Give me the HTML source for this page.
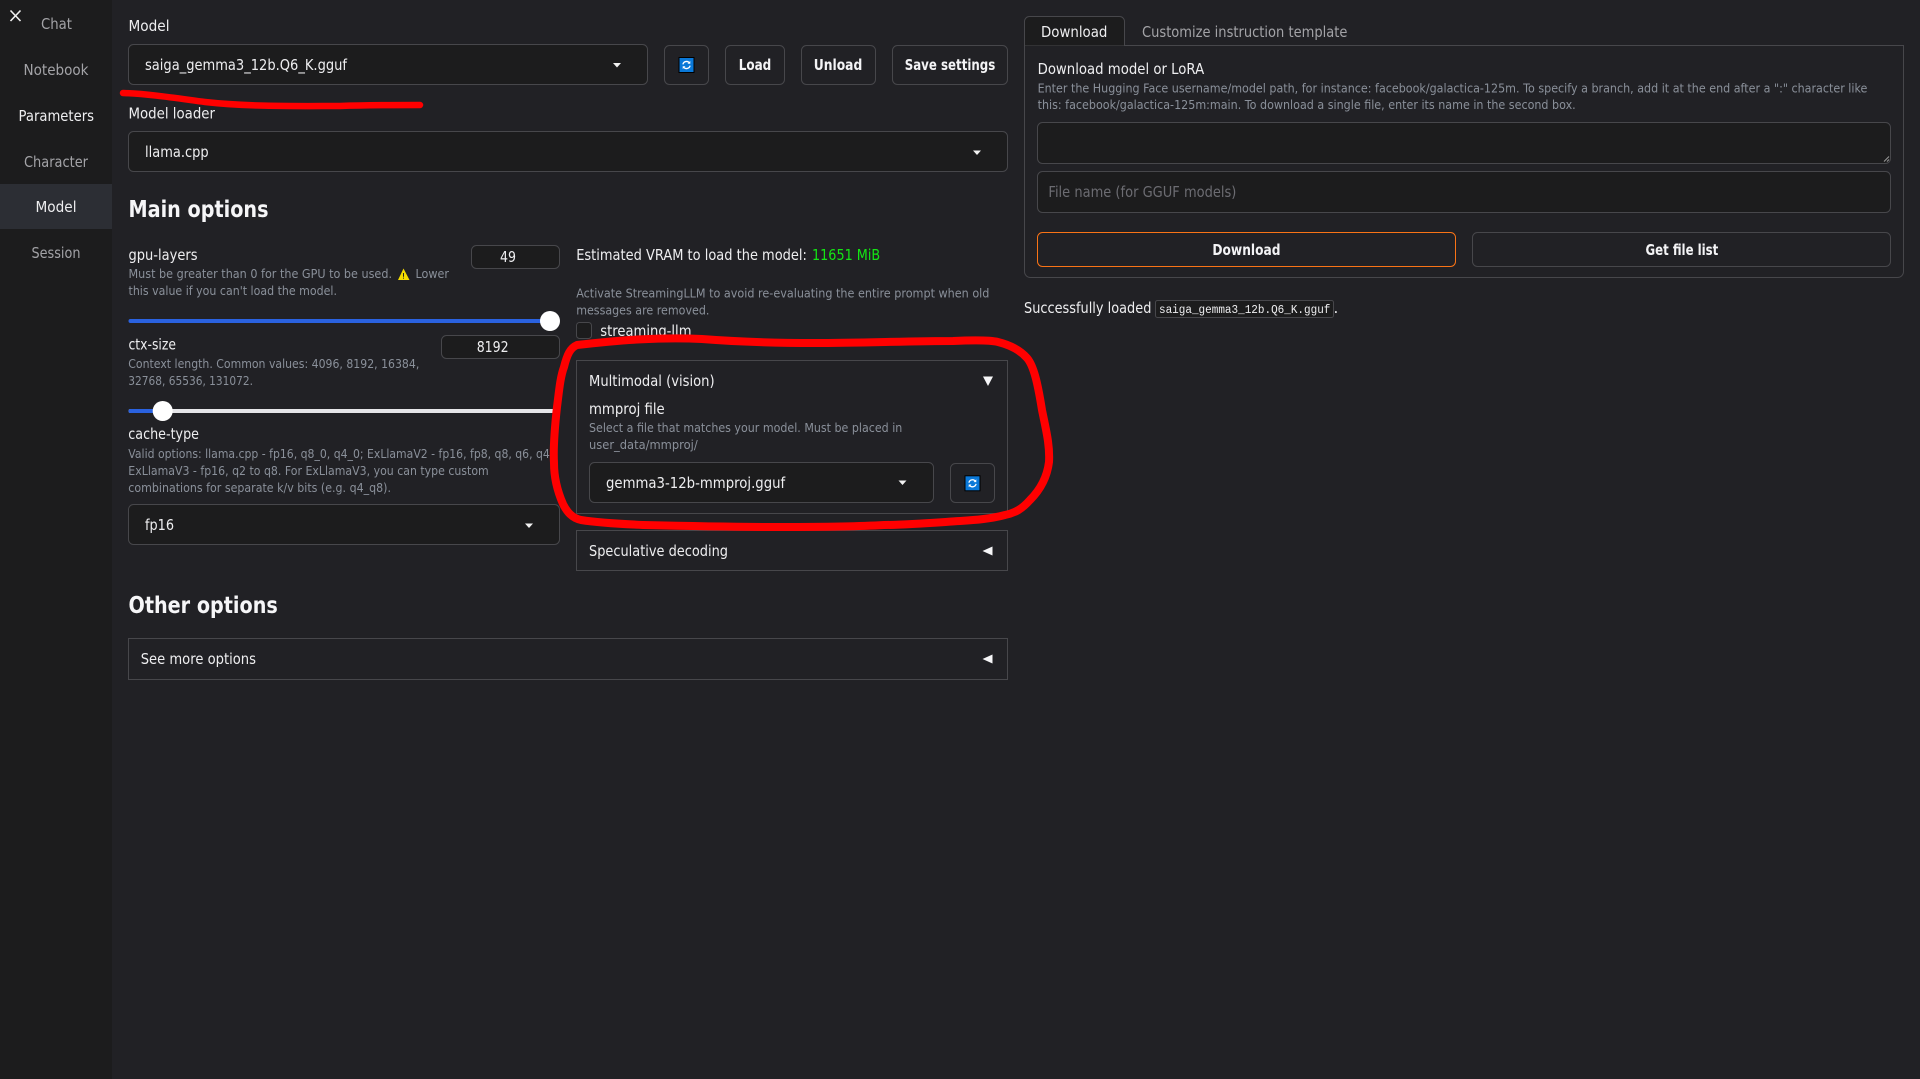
<!DOCTYPE html>
<html><head><meta charset="utf-8"><title>Model</title>
<style>
html,body{margin:0;padding:0;background:#212125;overflow:hidden}
svg{display:block}
text{font-family:"DejaVu Sans","Liberation Sans",sans-serif;font-size:15px;fill:#eeeef0}
.nav{font-size:15px;fill:#a3a3a7}
.info{font-size:12.8px;fill:#8a909a}
.b{font-weight:700;font-size:15px;fill:#f4f4f6}
.h{font-weight:700;font-size:23.5px;fill:#f6f6f8}
.box{fill:#1c1c1d;stroke:#47474b;stroke-width:1}
.btn{fill:#212125;stroke:#47474b;stroke-width:1}
.acc{fill:none;stroke:#47474b;stroke-width:1}
</style></head>
<body>
<svg xmlns="http://www.w3.org/2000/svg" width="1920" height="1079" viewBox="0 0 1920 1079">
<defs>
<g id="ref">
<rect x="-8" y="-8" width="16" height="16" fill="#000"/>
<rect x="-7" y="-7" width="14" height="14" fill="#0a78d8"/>
<path d="M-3.6 -0.6A3.7 3.7 0 0 1 3 -2M3.6 0.6A3.7 3.7 0 0 1 -3 2" fill="none" stroke="#fff" stroke-width="1.3"/>
<path d="M3.8 -4V-1.2H1zM-3.8 4V1.2H-1z" fill="#fff"/>
</g>
</defs>
<rect width="1920" height="1079" fill="#212125"/>
<rect width="112" height="1079" fill="#1c1c1d"/>
<rect y="184" width="112" height="45" fill="#2c2e34"/>
<path d="M10.5 10.5L20.5 21M20.5 10.5L10.5 21" stroke="#f0f0f0" stroke-width="1.6" fill="none"/>
<text class="nav" x="41" y="29" textLength="31" lengthAdjust="spacingAndGlyphs">Chat</text>
<text class="nav" x="23.5" y="75" textLength="65" lengthAdjust="spacingAndGlyphs">Notebook</text>
<text x="18.5" y="121" textLength="75.5" lengthAdjust="spacingAndGlyphs" style="fill:#eeeef0">Parameters</text>
<text class="nav" x="24" y="167" textLength="64" lengthAdjust="spacingAndGlyphs">Character</text>
<text x="35.5" y="212" textLength="41" lengthAdjust="spacingAndGlyphs" style="fill:#eeeef0">Model</text>
<text class="nav" x="31.5" y="258" textLength="49" lengthAdjust="spacingAndGlyphs">Session</text>

<text x="128.5" y="31" textLength="41" lengthAdjust="spacingAndGlyphs">Model</text>
<rect class="box" x="128.5" y="44.5" width="519" height="40" rx="5"/>
<text x="145" y="70" textLength="202" lengthAdjust="spacingAndGlyphs">saiga_gemma3_12b.Q6_K.gguf</text>
<path d="M613 63h8l-4 4.5z" fill="#f2f2f2"/>
<rect class="btn" x="664.5" y="45.5" width="44" height="39" rx="5"/>
<use href="#ref" x="686.5" y="65"/>
<rect class="btn" x="725.5" y="45.5" width="59" height="39" rx="5"/>
<text class="b" x="738.7" y="70" textLength="32.6" lengthAdjust="spacingAndGlyphs">Load</text>
<rect class="btn" x="801.5" y="45.5" width="74" height="39" rx="5"/>
<text class="b" x="813.7" y="70" textLength="48.6" lengthAdjust="spacingAndGlyphs">Unload</text>
<rect class="btn" x="892.5" y="45.5" width="115" height="39" rx="5"/>
<text class="b" x="904.7" y="70" textLength="90.6" lengthAdjust="spacingAndGlyphs">Save settings</text>

<text x="128.5" y="118.5" textLength="86.5" lengthAdjust="spacingAndGlyphs">Model loader</text>
<rect class="box" x="128.5" y="131.5" width="879" height="40" rx="5"/>
<text x="145" y="157" textLength="63.6" lengthAdjust="spacingAndGlyphs">llama.cpp</text>
<path d="M973 150.5h8l-4 4.5z" fill="#f2f2f2"/>
<text class="h" x="128.5" y="217" textLength="140" lengthAdjust="spacingAndGlyphs">Main options</text>

<text x="128.5" y="260" textLength="69" lengthAdjust="spacingAndGlyphs">gpu-layers</text>
<rect class="box" x="471.5" y="245.5" width="88" height="23" rx="5"/>
<text x="500" y="262" textLength="16" lengthAdjust="spacingAndGlyphs">49</text>
<text class="info" x="128.5" y="278" textLength="263.5" lengthAdjust="spacingAndGlyphs">Must be greater than 0 for the GPU to be used.</text>
<path d="M403.5 268.5L409.5 280H398z" fill="#f5dd00"/><path d="M403 273v3.8h1V273zM403 277.6v1h1v-1z" fill="#222"/>
<text class="info" x="415.5" y="278" textLength="33.5" lengthAdjust="spacingAndGlyphs">Lower</text>
<text class="info" x="128.5" y="295" textLength="208.5" lengthAdjust="spacingAndGlyphs">this value if you can't load the model.</text>
<rect x="128.5" y="319" width="422" height="4" rx="2" fill="#2a62e0"/>
<circle cx="550" cy="321" r="10" fill="#fff"/>

<text x="128.5" y="349.5" textLength="47.5" lengthAdjust="spacingAndGlyphs">ctx-size</text>
<rect class="box" x="441.5" y="335.5" width="118" height="23" rx="5"/>
<text x="476.7" y="352" textLength="32" lengthAdjust="spacingAndGlyphs">8192</text>
<text class="info" x="128.3" y="368" textLength="291" lengthAdjust="spacingAndGlyphs">Context length. Common values: 4096, 8192, 16384,</text>
<text class="info" x="128.3" y="385" textLength="124.7" lengthAdjust="spacingAndGlyphs">32768, 65536, 131072.</text>
<rect x="128.5" y="409" width="431" height="4" rx="2" fill="#e5e5e8"/>
<rect x="128.5" y="409" width="32" height="4" rx="2" fill="#2a62e0"/>
<circle cx="162.7" cy="411" r="10" fill="#fff"/>

<text x="128.3" y="439" textLength="70.7" lengthAdjust="spacingAndGlyphs">cache-type</text>
<text class="info" x="128.3" y="458" textLength="425" lengthAdjust="spacingAndGlyphs">Valid options: llama.cpp - fp16, q8_0, q4_0; ExLlamaV2 - fp16, fp8, q8, q6, q4,</text>
<text class="info" x="128.3" y="475" textLength="360.4" lengthAdjust="spacingAndGlyphs">ExLlamaV3 - fp16, q2 to q8. For ExLlamaV3, you can type custom</text>
<text class="info" x="128.3" y="492" textLength="262.7" lengthAdjust="spacingAndGlyphs">combinations for separate k/v bits (e.g. q4_q8).</text>
<rect class="box" x="128.5" y="504.5" width="431" height="40" rx="5"/>
<text x="145" y="530" textLength="29" lengthAdjust="spacingAndGlyphs">fp16</text>
<path d="M525 523.5h8l-4 4.5z" fill="#f2f2f2"/>

<text class="h" x="128.5" y="613" textLength="149.3" lengthAdjust="spacingAndGlyphs">Other options</text>
<rect class="acc" x="128.5" y="638.5" width="879" height="41"/>
<text x="140.7" y="664" textLength="115.3" lengthAdjust="spacingAndGlyphs">See more options</text>
<path d="M992.5 654.5v9l-10-4.5z" fill="#f6f6f8"/>

<text x="576.2" y="260" textLength="230.7" lengthAdjust="spacingAndGlyphs">Estimated VRAM to load the model:</text>
<text x="812" y="260" textLength="68.2" lengthAdjust="spacingAndGlyphs" style="fill:#14e614">11651 MiB</text>
<text class="info" x="576.2" y="297.5" textLength="413.2" lengthAdjust="spacingAndGlyphs">Activate StreamingLLM to avoid re-evaluating the entire prompt when old</text>
<text class="info" x="576.2" y="314.5" textLength="133.2" lengthAdjust="spacingAndGlyphs">messages are removed.</text>
<rect class="box" x="576.5" y="322.5" width="15" height="16" rx="3"/>
<text x="600.3" y="336" textLength="91.2" lengthAdjust="spacingAndGlyphs">streaming-llm</text>

<rect class="acc" x="576.5" y="360.5" width="431" height="153"/>
<text x="589" y="386" textLength="125.6" lengthAdjust="spacingAndGlyphs">Multimodal (vision)</text>
<path d="M983 376.5h10l-5 9.5z" fill="#f6f6f8"/>
<text x="589" y="414" textLength="75.7" lengthAdjust="spacingAndGlyphs">mmproj file</text>
<text class="info" x="589" y="432" textLength="313.3" lengthAdjust="spacingAndGlyphs">Select a file that matches your model. Must be placed in</text>
<text class="info" x="589" y="449" textLength="108.7" lengthAdjust="spacingAndGlyphs">user_data/mmproj/</text>
<rect class="box" x="589.5" y="462.5" width="344" height="40" rx="5"/>
<text x="606" y="488" textLength="179.2" lengthAdjust="spacingAndGlyphs">gemma3-12b-mmproj.gguf</text>
<path d="M898.5 480.5h8l-4 4.5z" fill="#f2f2f2"/>
<rect class="btn" x="950.5" y="463.5" width="44" height="39" rx="5"/>
<use href="#ref" x="972.5" y="483.3"/>
<rect class="acc" x="576.5" y="530.5" width="431" height="40"/>
<text x="589" y="556" textLength="139" lengthAdjust="spacingAndGlyphs">Speculative decoding</text>
<path d="M992.5 546.5v9l-10-4.5z" fill="#f6f6f8"/>

<path d="M1024.5 45.5H1903.5V271.5a6 6 0 0 1-6 6H1030.5a6 6 0 0 1-6-6V45.5z" class="acc"/>
<path d="M1024.5 45.5V21.5a5 5 0 0 1 5-5H1119.5a5 5 0 0 1 5 5V45.5" fill="#1c1c1d" stroke="#47474b"/>
<text x="1041" y="37" textLength="66.4" lengthAdjust="spacingAndGlyphs">Download</text>
<text x="1142" y="37" textLength="205.4" lengthAdjust="spacingAndGlyphs" style="fill:#a3a3a7">Customize instruction template</text>
<text x="1037.6" y="74" textLength="166.6" lengthAdjust="spacingAndGlyphs">Download model or LoRA</text>
<text class="info" x="1037.6" y="92.5" textLength="829.8" lengthAdjust="spacingAndGlyphs">Enter the Hugging Face username/model path, for instance: facebook/galactica-125m. To specify a branch, add it at the end after a ":" character like</text>
<text class="info" x="1037.6" y="109" textLength="538.1" lengthAdjust="spacingAndGlyphs">this: facebook/galactica-125m:main. To download a single file, enter its name in the second box.</text>
<rect class="box" x="1037.5" y="122.5" width="853" height="41" rx="5"/>
<path d="M1884 161.5L1889 156.5M1887 161.5L1889 159.5" stroke="#9a9a9a" stroke-width="1"/>
<rect class="box" x="1037.5" y="171.5" width="853" height="41" rx="5"/>
<text x="1048.4" y="197" textLength="188" lengthAdjust="spacingAndGlyphs" style="fill:#6c6c72">File name (for GGUF models)</text>
<rect x="1037.5" y="232.5" width="418" height="34" rx="5" fill="#212125" stroke="#f97316"/>
<text class="b" x="1212.4" y="255" textLength="68.1" lengthAdjust="spacingAndGlyphs">Download</text>
<rect class="btn" x="1472.5" y="232.5" width="418" height="34" rx="5"/>
<text class="b" x="1645.5" y="255" textLength="72.8" lengthAdjust="spacingAndGlyphs">Get file list</text>

<text x="1024" y="313" textLength="127.4" lengthAdjust="spacingAndGlyphs">Successfully loaded</text>
<rect class="box" x="1155.5" y="300.5" width="178" height="17" rx="2"/>
<text x="1159" y="313" textLength="171.4" lengthAdjust="spacingAndGlyphs" style="font-family:'Liberation Mono',monospace;font-size:11.5px">saiga_gemma3_12b.Q6_K.gguf</text>
<text x="1333.5" y="313">.</text>

<path d="M123 93C150 94 175 98 205 102C250 107 300 106 340 106C370 105 395 105 420 105" fill="none" stroke="#f00" stroke-width="6.5" stroke-linecap="round" stroke-linejoin="round"/>
<path d="M577 345C620 340 660 337 702 339C740 342 780 343 815 343C860 343 910 341 953 341C975 340 990 340 998 342C1010 345 1020 350 1027 358C1034 366 1038 385 1042 410C1046 430 1050 445 1049 462C1047 478 1040 490 1030 500C1022 509 1015 513 1005 515C990 519 975 520 960 521C930 523 905 525 884 525C850 527 815 527 781 527C735 527 685 526 643 525C620 524 600 523 581 520C572 518 567 512 563 504C556 488 554 475 554 463C553 445 555 425 557 407C559 392 560 378 564 367C567 355 570 348 577 345Z" fill="none" stroke="#f00" stroke-width="8" stroke-linejoin="round"/>
</svg>
</body></html>
